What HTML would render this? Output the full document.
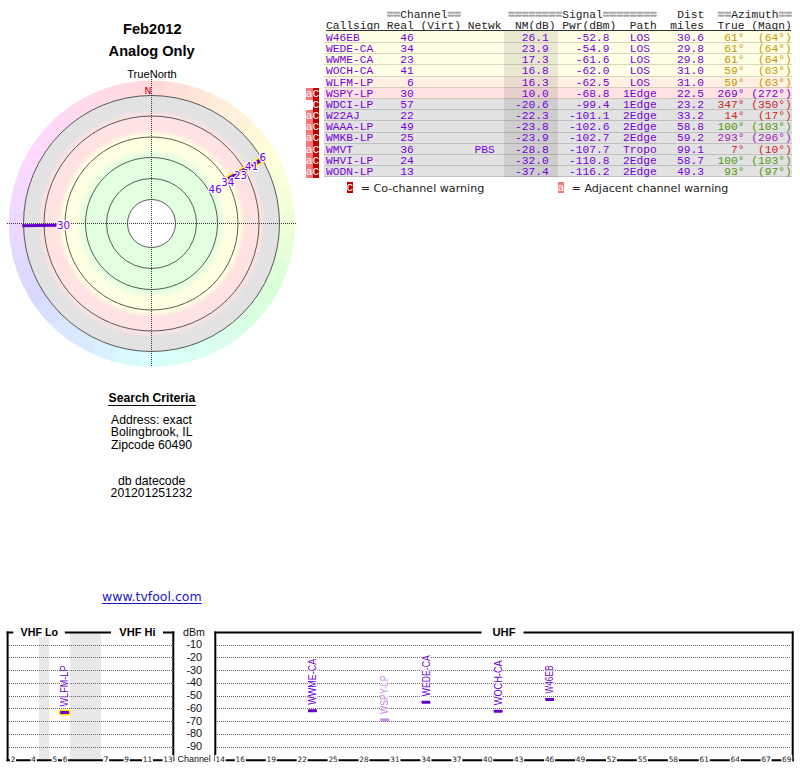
<!DOCTYPE html>
<html lang="en"><head><meta charset="utf-8"><title>TV Fool Radar Plot</title>
<style>
html,body{margin:0;padding:0;background:#fff;}
body{width:800px;height:768px;position:relative;overflow:hidden;font-family:"Liberation Sans",sans-serif;color:#000;}
#gfx{position:absolute;left:0;top:0;}
.t{position:absolute;white-space:pre;line-height:1;}
.c{text-align:center;transform:translateX(-50%);}
.mono{font-family:"Liberation Mono",monospace;font-size:11.25px;}
.ln{position:absolute;left:305.75px;white-space:pre;line-height:11.18px;height:11.18px;font-family:"Liberation Mono",monospace;font-size:11.25px;color:#7400dc;}
.a{background:#f87878;color:#fff;}
.C{background:#c00000;color:#fff;}
.hd{color:#222;}
.g{color:#a4a4a4;font-weight:bold;-webkit-text-stroke:0.7px #a4a4a4;}
svg text{white-space:pre;}
</style></head><body>

<svg id="gfx" width="800" height="768" viewBox="0 0 800 768">
<defs>
<radialGradient id="zones" cx="151.5" cy="223.5" r="128" gradientUnits="userSpaceOnUse">
<stop offset="0.0000" stop-color="#ffffff"/>
<stop offset="0.1875" stop-color="#ffffff"/>
<stop offset="0.1875" stop-color="#e2ffe0"/>
<stop offset="0.5312" stop-color="#e2ffe0"/>
<stop offset="0.5859" stop-color="#ffffe2"/>
<stop offset="0.6875" stop-color="#ffffe2"/>
<stop offset="0.7344" stop-color="#ffe2e2"/>
<stop offset="0.8438" stop-color="#ffe2e2"/>
<stop offset="0.8906" stop-color="#e2e2e2"/>
<stop offset="1.0000" stop-color="#e2e2e2"/>
</radialGradient>
</defs>
<path d="M152.00 223.70 L139.52 81.04 A143.2 143.2 0 0 1 165.23 81.11 Z" fill="hsl(0,100%,92.5%)"/>
<path d="M152.00 223.70 L164.48 81.04 A143.2 143.2 0 0 1 189.79 85.58 Z" fill="hsl(10,100%,92.5%)"/>
<path d="M152.00 223.70 L189.06 85.38 A143.2 143.2 0 0 1 213.20 94.24 Z" fill="hsl(20,100%,92.5%)"/>
<path d="M152.00 223.70 L212.52 93.92 A143.2 143.2 0 0 1 234.75 106.83 Z" fill="hsl(30,100%,92.5%)"/>
<path d="M152.00 223.70 L234.14 106.40 A143.2 143.2 0 0 1 253.79 122.97 Z" fill="hsl(40,100%,92.5%)"/>
<path d="M152.00 223.70 L253.26 122.44 A143.2 143.2 0 0 1 269.73 142.18 Z" fill="hsl(50,100%,92.5%)"/>
<path d="M152.00 223.70 L269.30 141.56 A143.2 143.2 0 0 1 282.10 163.86 Z" fill="hsl(60,100%,92.5%)"/>
<path d="M152.00 223.70 L281.78 163.18 A143.2 143.2 0 0 1 290.51 187.36 Z" fill="hsl(70,100%,92.5%)"/>
<path d="M152.00 223.70 L290.32 186.64 A143.2 143.2 0 0 1 294.72 211.97 Z" fill="hsl(80,100%,92.5%)"/>
<path d="M152.00 223.70 L294.66 211.22 A143.2 143.2 0 0 1 294.59 236.93 Z" fill="hsl(90,100%,92.5%)"/>
<path d="M152.00 223.70 L294.66 236.18 A143.2 143.2 0 0 1 290.12 261.49 Z" fill="hsl(100,100%,92.5%)"/>
<path d="M152.00 223.70 L290.32 260.76 A143.2 143.2 0 0 1 281.46 284.90 Z" fill="hsl(110,100%,92.5%)"/>
<path d="M152.00 223.70 L281.78 284.22 A143.2 143.2 0 0 1 268.87 306.45 Z" fill="hsl(120,100%,92.5%)"/>
<path d="M152.00 223.70 L269.30 305.84 A143.2 143.2 0 0 1 252.73 325.49 Z" fill="hsl(130,100%,92.5%)"/>
<path d="M152.00 223.70 L253.26 324.96 A143.2 143.2 0 0 1 233.52 341.43 Z" fill="hsl(140,100%,92.5%)"/>
<path d="M152.00 223.70 L234.14 341.00 A143.2 143.2 0 0 1 211.84 353.80 Z" fill="hsl(150,100%,92.5%)"/>
<path d="M152.00 223.70 L212.52 353.48 A143.2 143.2 0 0 1 188.34 362.21 Z" fill="hsl(160,100%,92.5%)"/>
<path d="M152.00 223.70 L189.06 362.02 A143.2 143.2 0 0 1 163.73 366.42 Z" fill="hsl(170,100%,92.5%)"/>
<path d="M152.00 223.70 L164.48 366.36 A143.2 143.2 0 0 1 138.77 366.29 Z" fill="hsl(180,100%,92.5%)"/>
<path d="M152.00 223.70 L139.52 366.36 A143.2 143.2 0 0 1 114.21 361.82 Z" fill="hsl(190,100%,92.5%)"/>
<path d="M152.00 223.70 L114.94 362.02 A143.2 143.2 0 0 1 90.80 353.16 Z" fill="hsl(200,100%,92.5%)"/>
<path d="M152.00 223.70 L91.48 353.48 A143.2 143.2 0 0 1 69.25 340.57 Z" fill="hsl(210,100%,92.5%)"/>
<path d="M152.00 223.70 L69.86 341.00 A143.2 143.2 0 0 1 50.21 324.43 Z" fill="hsl(220,100%,92.5%)"/>
<path d="M152.00 223.70 L50.74 324.96 A143.2 143.2 0 0 1 34.27 305.22 Z" fill="hsl(230,100%,92.5%)"/>
<path d="M152.00 223.70 L34.70 305.84 A143.2 143.2 0 0 1 21.90 283.54 Z" fill="hsl(240,100%,92.5%)"/>
<path d="M152.00 223.70 L22.22 284.22 A143.2 143.2 0 0 1 13.49 260.04 Z" fill="hsl(250,100%,92.5%)"/>
<path d="M152.00 223.70 L13.68 260.76 A143.2 143.2 0 0 1 9.28 235.43 Z" fill="hsl(260,100%,92.5%)"/>
<path d="M152.00 223.70 L9.34 236.18 A143.2 143.2 0 0 1 9.41 210.47 Z" fill="hsl(270,100%,92.5%)"/>
<path d="M152.00 223.70 L9.34 211.22 A143.2 143.2 0 0 1 13.88 185.91 Z" fill="hsl(280,100%,92.5%)"/>
<path d="M152.00 223.70 L13.68 186.64 A143.2 143.2 0 0 1 22.54 162.50 Z" fill="hsl(290,100%,92.5%)"/>
<path d="M152.00 223.70 L22.22 163.18 A143.2 143.2 0 0 1 35.13 140.95 Z" fill="hsl(300,100%,92.5%)"/>
<path d="M152.00 223.70 L34.70 141.56 A143.2 143.2 0 0 1 51.27 121.91 Z" fill="hsl(310,100%,92.5%)"/>
<path d="M152.00 223.70 L50.74 122.44 A143.2 143.2 0 0 1 70.48 105.97 Z" fill="hsl(320,100%,92.5%)"/>
<path d="M152.00 223.70 L69.86 106.40 A143.2 143.2 0 0 1 92.16 93.60 Z" fill="hsl(330,100%,92.5%)"/>
<path d="M152.00 223.70 L91.48 93.92 A143.2 143.2 0 0 1 115.66 85.19 Z" fill="hsl(340,100%,92.5%)"/>
<path d="M152.00 223.70 L114.94 85.38 A143.2 143.2 0 0 1 140.27 80.98 Z" fill="hsl(350,100%,92.5%)"/>
<circle cx="151.5" cy="223.5" r="128" fill="url(#zones)"/>
<circle cx="151.5" cy="223.5" r="24" fill="none" stroke="#333" stroke-width="0.8"/>
<circle cx="151.5" cy="223.5" r="45" fill="none" stroke="#333" stroke-width="0.8"/>
<circle cx="151.5" cy="223.5" r="66" fill="none" stroke="#333" stroke-width="0.8"/>
<circle cx="151.5" cy="223.5" r="86.5" fill="none" stroke="#333" stroke-width="0.8"/>
<circle cx="151.5" cy="223.5" r="107.5" fill="none" stroke="#333" stroke-width="0.8"/>
<circle cx="151.5" cy="223.5" r="128" fill="none" stroke="#333" stroke-width="0.8"/>
<path d="M7 223.5H296.5" stroke="#3a3a3a" stroke-width="1" stroke-dasharray="1 1" fill="none"/>
<path d="M151.5 79V367" stroke="#3a3a3a" stroke-width="1" stroke-dasharray="1 1" fill="none"/>
<path d="M226.77 179.87 L263.97 158.30" stroke="#ffee00" stroke-width="7" stroke-linecap="butt" fill="none"/>
<path d="M228.07 179.12 L263.36 158.65" stroke="#6600cc" stroke-width="3.8" stroke-linecap="butt" fill="none"/>
<path d="M56.51 225.16 L22.22 225.76" stroke="#6600cc" stroke-width="3" stroke-linecap="butt" fill="none"/>
<text x="208.6" y="192.8" font-family="DejaVu Sans, Liberation Sans, sans-serif" font-size="10.3" fill="#7400dc" stroke="#fff" stroke-width="2.6" stroke-opacity="0.95" stroke-linejoin="round" paint-order="stroke">46</text>
<text x="221.2" y="185.7" font-family="DejaVu Sans, Liberation Sans, sans-serif" font-size="10.3" fill="#7400dc" stroke="#fff" stroke-width="2.6" stroke-opacity="0.95" stroke-linejoin="round" paint-order="stroke">34</text>
<text x="234.0" y="178.8" font-family="DejaVu Sans, Liberation Sans, sans-serif" font-size="10.3" fill="#7400dc" stroke="#fff" stroke-width="2.6" stroke-opacity="0.95" stroke-linejoin="round" paint-order="stroke">23</text>
<text x="245.1" y="169.6" font-family="DejaVu Sans, Liberation Sans, sans-serif" font-size="10.3" fill="#7400dc" stroke="#fff" stroke-width="2.6" stroke-opacity="0.95" stroke-linejoin="round" paint-order="stroke">41</text>
<text x="259.5" y="161.0" font-family="DejaVu Sans, Liberation Sans, sans-serif" font-size="10.3" fill="#7400dc" stroke="#fff" stroke-width="2.6" stroke-opacity="0.95" stroke-linejoin="round" paint-order="stroke">6</text>
<text x="57.0" y="229.4" font-family="DejaVu Sans, Liberation Sans, sans-serif" font-size="10.3" fill="#7400dc" stroke="#fff" stroke-width="2.6" stroke-opacity="0.95" stroke-linejoin="round" paint-order="stroke">30</text>
<rect x="39" y="633" width="10.2" height="127" fill="#e8e8e8"/>
<rect x="70" y="633" width="31" height="127" fill="#e8e8e8"/>
<path d="M9 645.5H172M217 645.5H791" stroke="#666" stroke-width="1" stroke-dasharray="1 1" fill="none"/>
<path d="M9 657.5H172M217 657.5H791" stroke="#666" stroke-width="1" stroke-dasharray="1 1" fill="none"/>
<path d="M9 670.5H172M217 670.5H791" stroke="#666" stroke-width="1" stroke-dasharray="1 1" fill="none"/>
<path d="M9 683.5H172M217 683.5H791" stroke="#666" stroke-width="1" stroke-dasharray="1 1" fill="none"/>
<path d="M9 696.5H172M217 696.5H791" stroke="#666" stroke-width="1" stroke-dasharray="1 1" fill="none"/>
<path d="M9 708.5H172M217 708.5H791" stroke="#666" stroke-width="1" stroke-dasharray="1 1" fill="none"/>
<path d="M9 721.5H172M217 721.5H791" stroke="#666" stroke-width="1" stroke-dasharray="1 1" fill="none"/>
<path d="M9 734.5H172M217 734.5H791" stroke="#666" stroke-width="1" stroke-dasharray="1 1" fill="none"/>
<path d="M9 747.5H172M217 747.5H791" stroke="#666" stroke-width="1" stroke-dasharray="1 1" fill="none"/>
<rect x="13.3" y="624" width="51.5" height="13" fill="#fff"/>
<rect x="111" y="624" width="52" height="13" fill="#fff"/>
<path d="M7.6 631.5V761.3M173.3 631.5V761.3M215.3 631.5V761.3M792.7 631.5V761.3" stroke="#000" stroke-width="2" fill="none"/>
<path d="M6.6 632.5H13.3M64.8 632.5H111M163 632.5H174.3M214.3 632.5H481.5M523.5 632.5H793.7" stroke="#000" stroke-width="2" fill="none"/>
<path d="M6.6 760.3H174.3M214.3 760.3H793.7" stroke="#000" stroke-width="2" fill="none"/>
<rect x="9.90" y="755" width="6.20" height="8" fill="#fff"/>
<text x="13.00" y="762.4" font-family="DejaVu Sans, Liberation Sans, sans-serif" font-size="7.4" fill="#222" text-anchor="middle">2</text>
<rect x="30.60" y="755" width="6.20" height="8" fill="#fff"/>
<text x="33.70" y="762.4" font-family="DejaVu Sans, Liberation Sans, sans-serif" font-size="7.4" fill="#222" text-anchor="middle">4</text>
<rect x="51.70" y="755" width="6.20" height="8" fill="#fff"/>
<text x="54.80" y="762.4" font-family="DejaVu Sans, Liberation Sans, sans-serif" font-size="7.4" fill="#222" text-anchor="middle">5</text>
<rect x="61.90" y="755" width="6.20" height="8" fill="#fff"/>
<text x="65.00" y="762.4" font-family="DejaVu Sans, Liberation Sans, sans-serif" font-size="7.4" fill="#222" text-anchor="middle">6</text>
<rect x="102.90" y="755" width="6.20" height="8" fill="#fff"/>
<text x="106.00" y="762.4" font-family="DejaVu Sans, Liberation Sans, sans-serif" font-size="7.4" fill="#222" text-anchor="middle">7</text>
<rect x="123.60" y="755" width="6.20" height="8" fill="#fff"/>
<text x="126.70" y="762.4" font-family="DejaVu Sans, Liberation Sans, sans-serif" font-size="7.4" fill="#222" text-anchor="middle">9</text>
<rect x="142.00" y="755" width="11.00" height="8" fill="#fff"/>
<text x="147.50" y="762.4" font-family="DejaVu Sans, Liberation Sans, sans-serif" font-size="7.4" fill="#222" text-anchor="middle">11</text>
<rect x="162.50" y="755" width="11.00" height="8" fill="#fff"/>
<text x="168.00" y="762.4" font-family="DejaVu Sans, Liberation Sans, sans-serif" font-size="7.4" fill="#222" text-anchor="middle">13</text>
<rect x="214.70" y="755" width="11.00" height="8" fill="#fff"/>
<text x="220.20" y="762.4" font-family="DejaVu Sans, Liberation Sans, sans-serif" font-size="7.4" fill="#222" text-anchor="middle">14</text>
<rect x="234.82" y="755" width="11.00" height="8" fill="#fff"/>
<text x="240.32" y="762.4" font-family="DejaVu Sans, Liberation Sans, sans-serif" font-size="7.4" fill="#222" text-anchor="middle">16</text>
<rect x="265.75" y="755" width="11.00" height="8" fill="#fff"/>
<text x="271.25" y="762.4" font-family="DejaVu Sans, Liberation Sans, sans-serif" font-size="7.4" fill="#222" text-anchor="middle">19</text>
<rect x="296.68" y="755" width="11.00" height="8" fill="#fff"/>
<text x="302.18" y="762.4" font-family="DejaVu Sans, Liberation Sans, sans-serif" font-size="7.4" fill="#222" text-anchor="middle">22</text>
<rect x="327.61" y="755" width="11.00" height="8" fill="#fff"/>
<text x="333.11" y="762.4" font-family="DejaVu Sans, Liberation Sans, sans-serif" font-size="7.4" fill="#222" text-anchor="middle">25</text>
<rect x="358.54" y="755" width="11.00" height="8" fill="#fff"/>
<text x="364.04" y="762.4" font-family="DejaVu Sans, Liberation Sans, sans-serif" font-size="7.4" fill="#222" text-anchor="middle">28</text>
<rect x="389.47" y="755" width="11.00" height="8" fill="#fff"/>
<text x="394.97" y="762.4" font-family="DejaVu Sans, Liberation Sans, sans-serif" font-size="7.4" fill="#222" text-anchor="middle">31</text>
<rect x="420.40" y="755" width="11.00" height="8" fill="#fff"/>
<text x="425.90" y="762.4" font-family="DejaVu Sans, Liberation Sans, sans-serif" font-size="7.4" fill="#222" text-anchor="middle">34</text>
<rect x="451.33" y="755" width="11.00" height="8" fill="#fff"/>
<text x="456.83" y="762.4" font-family="DejaVu Sans, Liberation Sans, sans-serif" font-size="7.4" fill="#222" text-anchor="middle">37</text>
<rect x="482.26" y="755" width="11.00" height="8" fill="#fff"/>
<text x="487.76" y="762.4" font-family="DejaVu Sans, Liberation Sans, sans-serif" font-size="7.4" fill="#222" text-anchor="middle">40</text>
<rect x="513.19" y="755" width="11.00" height="8" fill="#fff"/>
<text x="518.69" y="762.4" font-family="DejaVu Sans, Liberation Sans, sans-serif" font-size="7.4" fill="#222" text-anchor="middle">43</text>
<rect x="544.12" y="755" width="11.00" height="8" fill="#fff"/>
<text x="549.62" y="762.4" font-family="DejaVu Sans, Liberation Sans, sans-serif" font-size="7.4" fill="#222" text-anchor="middle">46</text>
<rect x="575.05" y="755" width="11.00" height="8" fill="#fff"/>
<text x="580.55" y="762.4" font-family="DejaVu Sans, Liberation Sans, sans-serif" font-size="7.4" fill="#222" text-anchor="middle">49</text>
<rect x="605.98" y="755" width="11.00" height="8" fill="#fff"/>
<text x="611.48" y="762.4" font-family="DejaVu Sans, Liberation Sans, sans-serif" font-size="7.4" fill="#222" text-anchor="middle">52</text>
<rect x="636.91" y="755" width="11.00" height="8" fill="#fff"/>
<text x="642.41" y="762.4" font-family="DejaVu Sans, Liberation Sans, sans-serif" font-size="7.4" fill="#222" text-anchor="middle">55</text>
<rect x="667.84" y="755" width="11.00" height="8" fill="#fff"/>
<text x="673.34" y="762.4" font-family="DejaVu Sans, Liberation Sans, sans-serif" font-size="7.4" fill="#222" text-anchor="middle">58</text>
<rect x="698.77" y="755" width="11.00" height="8" fill="#fff"/>
<text x="704.27" y="762.4" font-family="DejaVu Sans, Liberation Sans, sans-serif" font-size="7.4" fill="#222" text-anchor="middle">61</text>
<rect x="729.70" y="755" width="11.00" height="8" fill="#fff"/>
<text x="735.20" y="762.4" font-family="DejaVu Sans, Liberation Sans, sans-serif" font-size="7.4" fill="#222" text-anchor="middle">64</text>
<rect x="760.63" y="755" width="11.00" height="8" fill="#fff"/>
<text x="766.13" y="762.4" font-family="DejaVu Sans, Liberation Sans, sans-serif" font-size="7.4" fill="#222" text-anchor="middle">67</text>
<rect x="781.25" y="755" width="11.00" height="8" fill="#fff"/>
<text x="786.75" y="762.4" font-family="DejaVu Sans, Liberation Sans, sans-serif" font-size="7.4" fill="#222" text-anchor="middle">69</text>
<text x="20.5" y="636.2" font-family="Liberation Sans, sans-serif" font-weight="bold" font-size="11" fill="#000" textLength="37.5" lengthAdjust="spacingAndGlyphs">VHF Lo</text>
<text x="119.3" y="636.2" font-family="Liberation Sans, sans-serif" font-weight="bold" font-size="11" fill="#000" textLength="36.3" lengthAdjust="spacingAndGlyphs">VHF Hi</text>
<text x="492.5" y="636.2" font-family="Liberation Sans, sans-serif" font-weight="bold" font-size="11" fill="#000" textLength="23" lengthAdjust="spacingAndGlyphs">UHF</text>
<text x="183" y="636" font-family="Liberation Sans, sans-serif" font-size="10.9" fill="#111" textLength="21.8" lengthAdjust="spacingAndGlyphs">dBm</text>
<text x="202.2" y="648.20" font-family="Liberation Sans, sans-serif" font-size="10.9" fill="#111" text-anchor="end">-10</text>
<text x="202.2" y="660.95" font-family="Liberation Sans, sans-serif" font-size="10.9" fill="#111" text-anchor="end">-20</text>
<text x="202.2" y="673.70" font-family="Liberation Sans, sans-serif" font-size="10.9" fill="#111" text-anchor="end">-30</text>
<text x="202.2" y="686.45" font-family="Liberation Sans, sans-serif" font-size="10.9" fill="#111" text-anchor="end">-40</text>
<text x="202.2" y="699.20" font-family="Liberation Sans, sans-serif" font-size="10.9" fill="#111" text-anchor="end">-50</text>
<text x="202.2" y="711.95" font-family="Liberation Sans, sans-serif" font-size="10.9" fill="#111" text-anchor="end">-60</text>
<text x="202.2" y="724.70" font-family="Liberation Sans, sans-serif" font-size="10.9" fill="#111" text-anchor="end">-70</text>
<text x="202.2" y="737.45" font-family="Liberation Sans, sans-serif" font-size="10.9" fill="#111" text-anchor="end">-80</text>
<text x="202.2" y="750.20" font-family="Liberation Sans, sans-serif" font-size="10.9" fill="#111" text-anchor="end">-90</text>
<text x="177.6" y="761.8" font-family="Liberation Sans, sans-serif" font-size="9.6" fill="#111" textLength="33.2" lengthAdjust="spacingAndGlyphs">Channel</text>
<rect x="58.30" y="709.54" width="12.6" height="6" rx="3" fill="#ffe800"/>
<rect x="60.10" y="711.04" width="9" height="3" rx="0.8" fill="#6a00cc"/>
<rect x="60.00" y="664.54" width="9.4" height="43.00" fill="#fff" fill-opacity="0.8"/>
<text transform="translate(68.30 706.54) rotate(-90)" font-family="Liberation Sans, sans-serif" font-size="10" textLength="41" lengthAdjust="spacingAndGlyphs" fill="#6a00cc">WLFM-LP</text>
<rect x="307.99" y="709.29" width="9" height="3" rx="0.8" fill="#6a00cc"/>
<rect x="307.89" y="657.79" width="9.4" height="48.00" fill="#fff" fill-opacity="0.8"/>
<text transform="translate(316.19 704.79) rotate(-90)" font-family="Liberation Sans, sans-serif" font-size="10" textLength="46" lengthAdjust="spacingAndGlyphs" fill="#6a00cc">WWME-CA</text>
<rect x="380.16" y="718.47" width="9" height="3" rx="0.8" fill="#c48ae6"/>
<rect x="380.06" y="674.47" width="9.4" height="40.50" fill="#fff" fill-opacity="0.8"/>
<text transform="translate(388.36 713.97) rotate(-90)" font-family="Liberation Sans, sans-serif" font-size="10" textLength="38.5" lengthAdjust="spacingAndGlyphs" fill="#c48ae6">WSPY-LP</text>
<rect x="421.40" y="700.75" width="9" height="3" rx="0.8" fill="#6a00cc"/>
<rect x="421.30" y="654.25" width="9.4" height="43.00" fill="#fff" fill-opacity="0.8"/>
<text transform="translate(429.60 696.25) rotate(-90)" font-family="Liberation Sans, sans-serif" font-size="10" textLength="41" lengthAdjust="spacingAndGlyphs" fill="#6a00cc">WEDE-CA</text>
<rect x="493.57" y="709.80" width="9" height="3" rx="0.8" fill="#6a00cc"/>
<rect x="493.47" y="659.30" width="9.4" height="47.00" fill="#fff" fill-opacity="0.8"/>
<text transform="translate(501.77 705.30) rotate(-90)" font-family="Liberation Sans, sans-serif" font-size="10" textLength="45" lengthAdjust="spacingAndGlyphs" fill="#6a00cc">WOCH-CA</text>
<rect x="545.12" y="698.07" width="9" height="3" rx="0.8" fill="#6a00cc"/>
<rect x="545.02" y="664.57" width="9.4" height="30.00" fill="#fff" fill-opacity="0.8"/>
<text transform="translate(553.32 693.57) rotate(-90)" font-family="Liberation Sans, sans-serif" font-size="10" textLength="28" lengthAdjust="spacingAndGlyphs" fill="#6a00cc">W46EB</text>
</svg>
<div class="t c" style="left:152.30px;top:21.64px;font-size:14.6px;font-family:'Liberation Sans',sans-serif;font-weight:bold;">Feb2012</div>
<div class="t c" style="left:151.60px;top:44.14px;font-size:14.6px;font-family:'Liberation Sans',sans-serif;font-weight:bold;">Analog Only</div>
<div class="t c" style="left:152.00px;top:69.20px;font-size:11.1px;font-family:'Liberation Sans',sans-serif;">TrueNorth</div>
<div class="t c" style="left:147.90px;top:85.73px;font-size:9.3px;font-family:'DejaVu Sans','Liberation Sans',sans-serif;color:#cc0020;">N</div>
<div class="t c" style="left:151.90px;top:391.57px;font-size:12.2px;font-family:'Liberation Sans',sans-serif;font-weight:bold;">Search Criteria</div>
<div style="position:absolute;left:108px;top:404.5px;width:87.5px;height:1.2px;background:#111;"></div>
<div class="t c" style="left:151.50px;top:413.63px;font-size:12.25px;font-family:'Liberation Sans',sans-serif;">Address: exact</div>
<div class="t c" style="left:151.70px;top:426.33px;font-size:12.25px;font-family:'Liberation Sans',sans-serif;">Bolingbrook, IL</div>
<div class="t c" style="left:151.50px;top:438.63px;font-size:12.25px;font-family:'Liberation Sans',sans-serif;">Zipcode 60490</div>
<div class="t c" style="left:151.60px;top:475.13px;font-size:12.25px;font-family:'Liberation Sans',sans-serif;">db datecode</div>
<div class="t c" style="left:151.50px;top:487.43px;font-size:12.25px;font-family:'Liberation Sans',sans-serif;">201201251232</div>
<div class="t c" style="left:151.85px;top:591.12px;font-size:12.5px;font-family:'DejaVu Sans','Liberation Sans',sans-serif;color:#1818c4;text-decoration:underline;text-decoration-thickness:1px;text-underline-offset:2px;">www.tvfool.com</div>
<div style="position:absolute;left:323.5px;top:31.00px;width:468.7px;height:12.08px;background:#ffffe6;border-bottom:1px solid rgba(0,0,0,0.15);box-sizing:border-box;"></div>
<div style="position:absolute;left:323.5px;top:43.08px;width:468.7px;height:11.18px;background:#ffffe6;border-bottom:1px solid rgba(0,0,0,0.15);box-sizing:border-box;"></div>
<div style="position:absolute;left:323.5px;top:54.26px;width:468.7px;height:11.18px;background:#ffffe6;border-bottom:1px solid rgba(0,0,0,0.15);box-sizing:border-box;"></div>
<div style="position:absolute;left:323.5px;top:65.44px;width:468.7px;height:11.18px;background:#ffffe6;border-bottom:1px solid rgba(0,0,0,0.15);box-sizing:border-box;"></div>
<div style="position:absolute;left:323.5px;top:76.62px;width:468.7px;height:11.18px;background:#fff0e2;border-bottom:1px solid rgba(0,0,0,0.15);box-sizing:border-box;"></div>
<div style="position:absolute;left:323.5px;top:87.80px;width:468.7px;height:11.18px;background:#ffe2e2;border-bottom:1px solid rgba(0,0,0,0.15);box-sizing:border-box;"></div>
<div style="position:absolute;left:323.5px;top:98.98px;width:468.7px;height:11.18px;background:#e2e2e2;border-bottom:1px solid rgba(0,0,0,0.15);box-sizing:border-box;"></div>
<div style="position:absolute;left:323.5px;top:110.16px;width:468.7px;height:11.18px;background:#e2e2e2;border-bottom:1px solid rgba(0,0,0,0.15);box-sizing:border-box;"></div>
<div style="position:absolute;left:323.5px;top:121.34px;width:468.7px;height:11.18px;background:#e2e2e2;border-bottom:1px solid rgba(0,0,0,0.15);box-sizing:border-box;"></div>
<div style="position:absolute;left:323.5px;top:132.52px;width:468.7px;height:11.18px;background:#e2e2e2;border-bottom:1px solid rgba(0,0,0,0.15);box-sizing:border-box;"></div>
<div style="position:absolute;left:323.5px;top:143.70px;width:468.7px;height:11.18px;background:#e2e2e2;border-bottom:1px solid rgba(0,0,0,0.15);box-sizing:border-box;"></div>
<div style="position:absolute;left:323.5px;top:154.88px;width:468.7px;height:11.18px;background:#e2e2e2;border-bottom:1px solid rgba(0,0,0,0.15);box-sizing:border-box;"></div>
<div style="position:absolute;left:323.5px;top:166.06px;width:468.7px;height:11.18px;background:#e2e2e2;border-bottom:1px solid rgba(0,0,0,0.15);box-sizing:border-box;"></div>
<div style="position:absolute;left:504.2px;top:31px;width:53.4px;height:146.24px;background:rgba(0,0,0,0.085);"></div>
<div class="ln hd" style="top:10.30px;">            <span class="g">==</span>Channel<span class="g">==</span>       <span class="g">========</span>Signal<span class="g">========</span>   Dist  <span class="g">==</span>Azimuth<span class="g">==</span></div>
<div class="ln hd" style="top:21.30px;">   Callsign Real (Virt) Netwk  NM(dB) Pwr(dBm)  Path  miles  True (Magn)</div>
<div style="position:absolute;left:326px;top:30px;width:465px;height:1px;background:#333;"></div>
<div class="ln" style="top:32.80px;">   W46EB      46                26.1    -52.8   LOS    30.6  <span style="color:#c89600"> 61°  (64°)</span></div>
<div class="ln" style="top:43.98px;">   WEDE-CA    34                23.9    -54.9   LOS    29.8  <span style="color:#c89600"> 61°  (64°)</span></div>
<div class="ln" style="top:55.16px;">   WWME-CA    23                17.3    -61.6   LOS    29.8  <span style="color:#c89600"> 61°  (64°)</span></div>
<div class="ln" style="top:66.34px;">   WOCH-CA    41                16.8    -62.0   LOS    31.0  <span style="color:#c89600"> 59°  (63°)</span></div>
<div class="ln" style="top:77.52px;">   WLFM-LP     6                16.3    -62.5   LOS    31.0  <span style="color:#c89600"> 59°  (63°)</span></div>
<div class="ln" style="top:88.70px;"><span class="a">a</span><span class="C">C</span> WSPY-LP    30                10.0    -68.8  1Edge   22.5  <span style="color:#7400dc">269° (272°)</span></div>
<div class="ln" style="top:99.88px;"> <span class="C">C</span> WDCI-LP    57               -20.6    -99.4  1Edge   23.2  <span style="color:#cc2028">347° (350°)</span></div>
<div class="ln" style="top:111.06px;"><span class="a">a</span><span class="C">C</span> W22AJ      22               -22.3   -101.1  2Edge   33.2  <span style="color:#cc2c20"> 14°  (17°)</span></div>
<div class="ln" style="top:122.24px;"><span class="a">a</span><span class="C">C</span> WAAA-LP    49               -23.8   -102.6  2Edge   58.8  <span style="color:#4e9608">100° (103°)</span></div>
<div class="ln" style="top:133.42px;"><span class="a">a</span><span class="C">C</span> WMKB-LP    25               -23.9   -102.7  2Edge   59.2  <span style="color:#a020b0">293° (296°)</span></div>
<div class="ln" style="top:144.60px;"><span class="a">a</span><span class="C">C</span> WMVT       36         PBS   -28.8   -107.7  Tropo   99.1  <span style="color:#cc2424">  7°  (10°)</span></div>
<div class="ln" style="top:155.78px;"><span class="a">a</span><span class="C">C</span> WHVI-LP    24               -32.0   -110.8  2Edge   58.7  <span style="color:#4e9608">100° (103°)</span></div>
<div class="ln" style="top:166.96px;"><span class="a">a</span><span class="C">C</span> WODN-LP    13               -37.4   -116.2  2Edge   49.3  <span style="color:#4e9608"> 93°  (97°)</span></div>
<div class="ln" style="top:182.25px;left:346.6px;height:10.4px;line-height:12.74px;width:6.9px;background:#c00000;color:#fff;overflow:visible;">C</div>
<div class="t" style="left:360.80px;top:183.11px;font-size:11.1px;font-family:'DejaVu Sans','Liberation Sans',sans-serif;color:#222;">= Co-channel warning</div>
<div class="ln" style="top:182.25px;left:557.6px;height:10.4px;line-height:12.74px;width:6.9px;background:#f87878;color:#fff;overflow:visible;">a</div>
<div class="t" style="left:571.60px;top:183.11px;font-size:11.1px;font-family:'DejaVu Sans','Liberation Sans',sans-serif;color:#222;">= Adjacent channel warning</div>
</body></html>
